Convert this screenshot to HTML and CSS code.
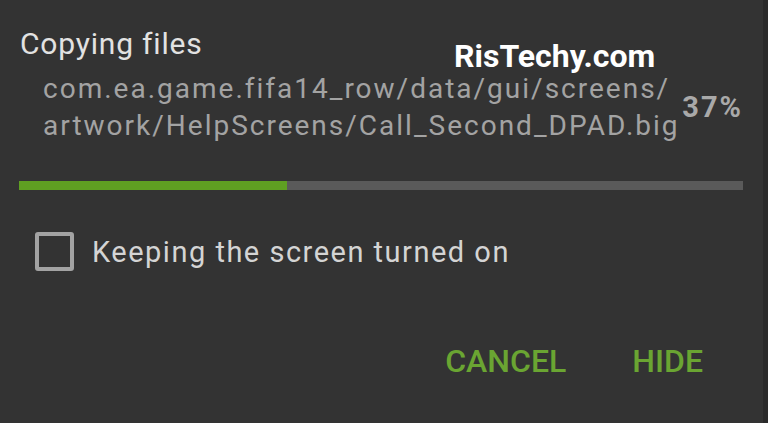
FILE: index.html
```html
<!DOCTYPE html>
<html lang="en">
<head>
    <meta charset="UTF-8">
    <meta name="viewport" content="width=device-width, initial-scale=1.0">
    <title>Copying files</title>
    <link rel="stylesheet" href="styles.css">
</head>
<body>
    <div id="dialog">
        <div class="title">Copying files</div>
        <div class="file-row">
            <div class="file-path">
                <span class="path-line">com.ea.game.fifa14_row/data/gui/screens/</span>
                <span class="path-line">artwork/HelpScreens/Call_Second_DPAD.big</span>
            </div>
            <div class="percent">37%</div>
        </div>
        <div class="progress">
            <div class="progress-fill" style="width: 37%"></div>
        </div>
        <label class="check-row">
            <span class="checkbox"></span>
            <span class="check-label">Keeping the screen turned on</span>
        </label>
        <div class="actions">
            <button class="action-btn">CANCEL</button>
            <button class="action-btn">HIDE</button>
        </div>
        <div class="watermark">RisTechy.com</div>
    </div>
</body>
</html>
```

FILE: styles.css
```css
body {
    margin: 0;
    background-color: #333333;
    font-family: Roboto, "Liberation Sans", sans-serif;
    height: 100vh;
    overflow: hidden;
}
#dialog {
    position: relative;
    height: 100%;
    box-sizing: border-box;
    padding: 26px 20px 0 19px;
    border-right: 5px solid #2a2a2a;
}
.title {
    font-size: 30px;
    line-height: 36px;
    color: #e2e2e2;
    margin-left: 1px;
    letter-spacing: 0.8px;
}
.file-row {
    display: flex;
    margin-top: 8px;
}
.file-path {
    margin-left: 24px;
    font-size: 28px;
    line-height: 37px;
    color: #a3a3a3;
    letter-spacing: 2px;
}
.path-line {
    display: block;
    white-space: nowrap;
}
.percent {
    margin-top: 20px;
    margin-left: auto;
    font-size: 29px;
    line-height: 34px;
    font-weight: bold;
    color: #a9a9a9;
    letter-spacing: 2px;
}
.progress {
    margin-top: 37px;
    height: 9px;
    background-color: #5a5a5a;
}
.progress-fill {
    height: 100%;
    background-color: #5f9f22;
}
.check-row {
    display: flex;
    align-items: center;
    margin-top: 42px;
    margin-left: 16px;
    gap: 18px;
}
.checkbox {
    width: 31px;
    height: 31px;
    border: 4px solid #a3a3a3;
    border-radius: 3px;
}
.check-label {
    font-size: 29px;
    line-height: 34px;
    color: #d4d4d4;
    letter-spacing: 1.5px;
}
.actions {
    display: flex;
    justify-content: flex-end;
    gap: 66px;
    margin-top: 71px;
    padding-right: 40px;
}
.action-btn {
    background: none;
    border: none;
    padding: 0;
    font-family: inherit;
    font-size: 32px;
    line-height: 38px;
    font-weight: 500;
    color: #6aa532;
}
.watermark {
    position: absolute;
    left: 454px;
    top: 40px;
    font-size: 32px;
    line-height: 32px;
    font-weight: bold;
    color: #ffffff;
}
```
